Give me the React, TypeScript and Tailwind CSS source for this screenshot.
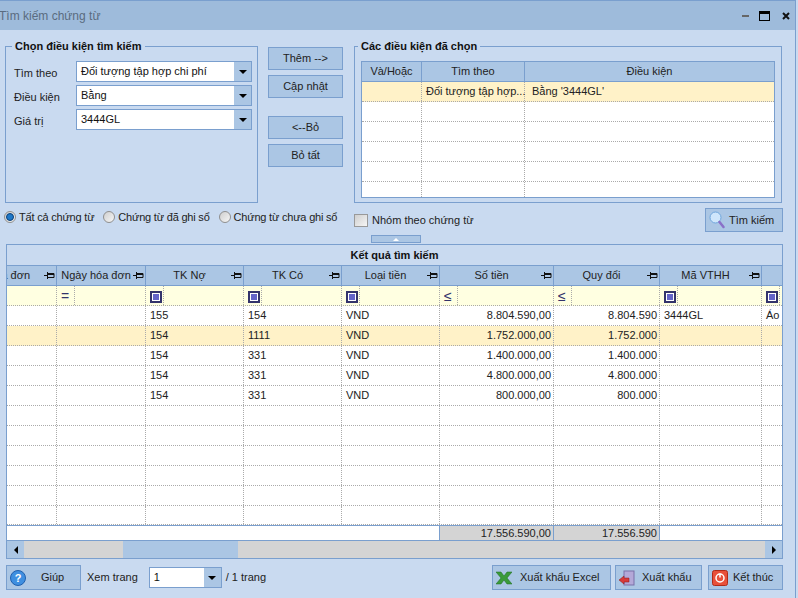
import React from 'react';

const border = 'border-[#7a9fce]';
const gridColumns = 'grid grid-cols-[50px_89px_98px_98px_98px_114px_106px_102px_1fr]';

const Combo = ({ value, className }: { value: string; className: string }) => (
  <div className={`flex h-[21px] bg-white border ${border} ${className}`}>
    <span className="flex-1 pl-[4px] leading-[18px] text-[#111]">{value}</span>
    <span className="w-[17px] bg-[#abc6e4] flex items-center justify-center">
      <span className="w-0 h-0 border-x-[4px] border-x-transparent border-t-[4px] border-t-black" />
    </span>
  </div>
);

const Btn = ({ children, className = '' }: { children: React.ReactNode; className?: string }) => (
  <div className={`flex items-center justify-center bg-[#abc6e4] border ${border} text-[#222] ${className}`}>
    {children}
  </div>
);

const Radio = ({ checked, label }: { checked?: boolean; label: string }) => (
  <div className="flex items-center gap-[3px]">
    <span className="w-[12px] h-[12px] rounded-full border border-[#8f8f8f] bg-gradient-to-br from-[#cfcfcf] to-[#f6f6f6] flex items-center justify-center">
      {checked && <span className="w-[8px] h-[8px] rounded-full bg-[#1e78c8] border border-[#0b3f78]" />}
    </span>
    <span className="tracking-[-0.2px]">{label}</span>
  </div>
);

const Pin = () => (
  <svg width="11" height="7" viewBox="0 0 11 7" className="absolute right-[1px] top-[6px]">
    <path d="M0 3.5h3M3.5 0v7M3.5 1.5h6.5v4H3.5M3.5 2.5h6.5" stroke="#111" fill="none" />
  </svg>
);

const headers = ['hóa đơn', 'Ngày hóa đơn', 'TK Nợ', 'TK Có', 'Loại tiền', 'Số tiền', 'Quy đổi', 'Mã VTHH', ''];
const filters = ['', '=', 'box', 'box', 'box', '≤', '≤', 'box', 'box'];
const emptyRow = ['', '', '', '', '', '', '', '', ''];
const rows = [
  ['', '', '155', '154', 'VND', '8.804.590,00', '8.804.590', '3444GL', 'Áo'],
  ['', '', '154', '1111', 'VND', '1.752.000,00', '1.752.000', '', ''],
  ['', '', '154', '331', 'VND', '1.400.000,00', '1.400.000', '', ''],
  ['', '', '154', '331', 'VND', '4.800.000,00', '4.800.000', '', ''],
  ['', '', '154', '331', 'VND', '800.000,00', '800.000', '', ''],
  emptyRow, emptyRow, emptyRow, emptyRow, emptyRow, emptyRow,
];
const conditionRows = [0, 1, 2, 3, 4, 5];

const App = () => {
  return (
    <div className="w-[798px] h-[598px] overflow-hidden bg-[#c9daf0]">
      <div className={`w-[796px] h-[598px] flex flex-col bg-[#c9daf0] text-[11px] text-[#222] border-t border-r ${border} font-['Liberation_Sans',sans-serif]`}>
        {/* title bar */}
        <div className="h-[29px] shrink-0 bg-[#9ebbdb] flex items-center justify-between pr-[5px]">
          <span className="text-[12px] text-[#5a6b80] -ml-[1px] mt-[1px]">Tìm kiếm chứng từ</span>
          <div className="flex items-center">
            <span className="w-[7px] h-[2px] bg-[#666]" />
            <span className="ml-[10px] w-[11px] h-[10px] border border-black border-t-[3px]" />
            <svg width="8" height="8" viewBox="0 0 8 8" className="ml-[12px]"><path d="M1 1l6 6M7 1l-6 6" stroke="#111" strokeWidth="2" /></svg>
          </div>
        </div>

        {/* search conditions */}
        <div className="flex mt-[16px] pl-[5px] h-[157px] shrink-0">
          <fieldset className={`w-[253px] border ${border} relative pl-[8px] pr-[5px] pt-[14px]`}>
            <span className="absolute -top-[8px] left-[6px] px-[3px] bg-[#c9daf0] font-bold text-[#111] leading-[14px]">Chọn điều kiện tìm kiếm</span>
            <div className="flex flex-col gap-[3px]">
              {[['Tìm theo', 'Đối tượng tập hợp chi phí'], ['Điều kiện', 'Bằng'], ['Giá trị', '3444GL']].map(([label, value]) => (
                <div key={label} className="flex items-center">
                  <span className="w-[62px] pt-[3px]">{label}</span>
                  <Combo value={value} className="w-[176px]" />
                </div>
              ))}
            </div>
          </fieldset>

          <div className="ml-[10px] w-[75px] flex flex-col pt-[1px]">
            <Btn className="h-[23px]">Thêm --&gt;</Btn>
            <Btn className="h-[23px] mt-[5px]">Cập nhật</Btn>
            <Btn className="h-[23px] mt-[18px]">&lt;--Bỏ</Btn>
            <Btn className="h-[23px] mt-[5px]">Bỏ tất</Btn>
          </div>

          <fieldset className={`ml-[11px] w-[428px] border ${border} relative px-[6px] pt-[14px]`}>
            <span className="absolute -top-[8px] left-[3px] px-[3px] bg-[#c9daf0] font-bold text-[#111] leading-[14px]">Các điều kiện đã chọn</span>
            <div className={`h-[137px] border ${border} bg-white overflow-hidden`}>
              <div className={`h-[20px] grid grid-cols-[60px_103px_1fr] bg-[#abc6e4] border-b ${border} text-center leading-[19px]`}>
                <span className={`border-r ${border}`}>Và/Hoặc</span>
                <span className={`border-r ${border}`}>Tìm theo</span>
                <span>Điều kiện</span>
              </div>
              {conditionRows.map(i => (
                <div key={i} className={`h-[20px] shrink-0 grid grid-cols-[60px_103px_1fr] border-b border-dotted border-[#aaa] leading-[19px] ${i === 0 ? 'bg-[#fff2c8]' : ''}`}>
                  <span className="border-r border-dotted border-[#aaa]" />
                  <span className="border-r border-dotted border-[#aaa] pl-[4px] whitespace-nowrap">{i === 0 ? 'Đối tượng tập hợp...' : ''}</span>
                  <span className="pl-[7px]">{i === 0 ? "Bằng '3444GL'" : ''}</span>
                </div>
              ))}
            </div>
          </fieldset>
        </div>

        {/* filter row */}
        <div className="flex items-center h-[24px] mt-[5px] pl-[4px] shrink-0">
          <div className="flex gap-[9px] w-[350px] -mt-[6px]">
            <Radio checked label="Tất cả chứng từ" />
            <Radio label="Chứng từ đã ghi sổ" />
            <Radio label="Chứng từ chưa ghi sổ" />
          </div>
          <span className="w-[14px] h-[13px] border border-[#999] bg-gradient-to-br from-[#cfcfcf] to-[#f6f6f6]" />
          <span className="ml-[4px]">Nhóm theo chứng từ</span>
          <Btn className="ml-auto mr-[12px] w-[78px] h-[24px] justify-start pl-[3px]">
            <svg width="16" height="18" viewBox="0 0 16 18">
              <circle cx="6.5" cy="6.5" r="5.5" fill="#cfe6fb" stroke="#6fa6dc" />
              <path d="M10.5 11l4 5" stroke="#8a70c8" strokeWidth="2.5" strokeLinecap="round" />
            </svg>
            <span className="ml-[4px]">Tìm kiếm</span>
          </Btn>
        </div>

        {/* collapse handle */}
        <div className={`self-start ml-[371px] mt-[3px] w-[50px] h-[8px] shrink-0 bg-[#abc6e4] border ${border} flex items-center justify-center`}>
          <span className="w-0 h-0 border-x-[3px] border-x-transparent border-b-[3px] border-b-white" />
        </div>

        {/* results */}
        <div className={`ml-[6px] mt-[1px] w-[777px] h-[315px] shrink-0 border ${border} flex flex-col`}>
          <div className={`h-[21px] shrink-0 text-center font-bold text-[#111] leading-[20px] border-b ${border}`}>Kết quả tìm kiếm</div>
          <div className={`${gridColumns} h-[20px] shrink-0 bg-[#abc6e4] border-b ${border}`}>
            {headers.map((h, i) => (
              <div key={i} className={`relative flex leading-[19px] border-r ${border} last:border-r-0 whitespace-nowrap overflow-hidden ${i === 0 ? 'justify-end pr-[26px]' : 'justify-center pr-[10px]'}`}>
                {h}
                {h && <Pin />}
              </div>
            ))}
          </div>
          <div className={`${gridColumns} h-[20px] shrink-0 bg-[#ffffe1] border-b border-dotted border-[#aaa]`}>
            {filters.map((f, i) => (
              <div key={i} className="flex border-r border-dotted border-[#aaa] last:border-r-0">
                {f && (
                  <div className="w-[18px] border-r border-dotted border-[#aaa] flex items-center pl-[4px] text-[14px] text-[#33336b]">
                    {f === 'box' ? (
                      <span className="shrink-0 w-[12px] h-[12px] border-2 border-[#33336b] bg-white flex items-center justify-center">
                        <span className="w-[6px] h-[6px] bg-[#6464c8]" />
                      </span>
                    ) : f}
                  </div>
                )}
              </div>
            ))}
          </div>
          {rows.map((row, r) => (
            <div key={r} className={`${gridColumns} ${r === 10 ? 'h-[19px]' : 'h-[20px]'} shrink-0 border-b border-dotted border-[#aaa] leading-[19px] ${r === 1 ? 'bg-[#fff2c8]' : 'bg-white'}`}>
              {row.map((cell, c) => (
                <div key={c} className={`border-r border-dotted border-[#aaa] last:border-r-0 whitespace-nowrap overflow-hidden ${c === 5 || c === 6 ? 'text-right pr-[2px]' : 'pl-[4px]'}`}>{cell}</div>
              ))}
            </div>
          ))}
          <div className={`${gridColumns} h-[16px] shrink-0 bg-white border-y ${border} leading-[14px]`}>
            {['', '', '', '', '', '17.556.590,00', '17.556.590', '', ''].map((cell, c) => (
              <div key={c} className={`text-right pr-[2px] ${c === 5 || c === 6 ? `bg-[#d4d4d4] border-r ${border}` : ''} ${c === 4 ? `border-r ${border}` : ''}`}>{cell}</div>
            ))}
          </div>
          <div className="flex-1 flex bg-[#d4d4d4]">
            <span className="w-[17px] bg-[#abc6e4] flex items-center justify-center">
              <span className="w-0 h-0 border-y-[4px] border-y-transparent border-r-[4px] border-r-black" />
            </span>
            <span className="ml-[99px] w-[115px] bg-[#abc6e4]" />
            <span className="ml-auto w-[17px] bg-[#abc6e4] flex items-center justify-center">
              <span className="w-0 h-0 border-y-[4px] border-y-transparent border-l-[4px] border-l-black" />
            </span>
          </div>
        </div>

        {/* footer */}
        <div className="flex items-center mt-[6px] pl-[6px] h-[25px] shrink-0">
          <Btn className="w-[75px] h-[25px] justify-start pl-[3px]">
            <svg width="16" height="16" viewBox="0 0 16 16">
              <circle cx="8" cy="8" r="7.5" fill="#3f8fe0" stroke="#1f5fae" />
              <text x="8" y="12" textAnchor="middle" fontSize="11" fontWeight="bold" fill="#fff">?</text>
            </svg>
            <span className="ml-[15px]">Giúp</span>
          </Btn>
          <span className="ml-[6px]">Xem trang</span>
          <Combo value="1" className="ml-[11px] w-[73px]" />
          <span className="ml-[4px]">/ 1 trang</span>
          <Btn className="ml-auto w-[119px] h-[25px] justify-start pl-[3px]">
            <svg width="16" height="14" viewBox="0 0 16 14"><path d="M0 1h5l3 4 3-4h5l-5 6 5 6h-5l-3-4-3 4H0l5-6z" fill="#3a9a3a" stroke="#1d6b1d" strokeWidth=".5" /></svg>
            <span className="ml-[8px]">Xuất khẩu Excel</span>
          </Btn>
          <Btn className="ml-[4px] w-[87px] h-[25px] justify-start pl-[3px]">
            <svg width="16" height="16" viewBox="0 0 16 16">
              <rect x="5" y="1" width="10" height="14" fill="#b4a8d8" stroke="#7a70a8" />
              <path d="M0 10l5-4v2h5v4H5v2z" fill="#d83a3a" stroke="#8a1a1a" strokeWidth=".5" />
            </svg>
            <span className="ml-[7px]">Xuất khẩu</span>
          </Btn>
          <Btn className="ml-[6px] mr-[12px] w-[75px] h-[25px] justify-start pl-[3px]">
            <svg width="16" height="16" viewBox="0 0 16 16">
              <rect x=".5" y=".5" width="15" height="15" rx="2" fill="#e8503a" stroke="#b02a18" />
              <circle cx="8" cy="8" r="4" fill="none" stroke="#fff" strokeWidth="1.5" />
              <path d="M8 3.5v4" stroke="#fff" strokeWidth="1.5" />
            </svg>
            <span className="ml-[5px]">Kết thúc</span>
          </Btn>
        </div>
      </div>
    </div>
  );
};

export default App;
